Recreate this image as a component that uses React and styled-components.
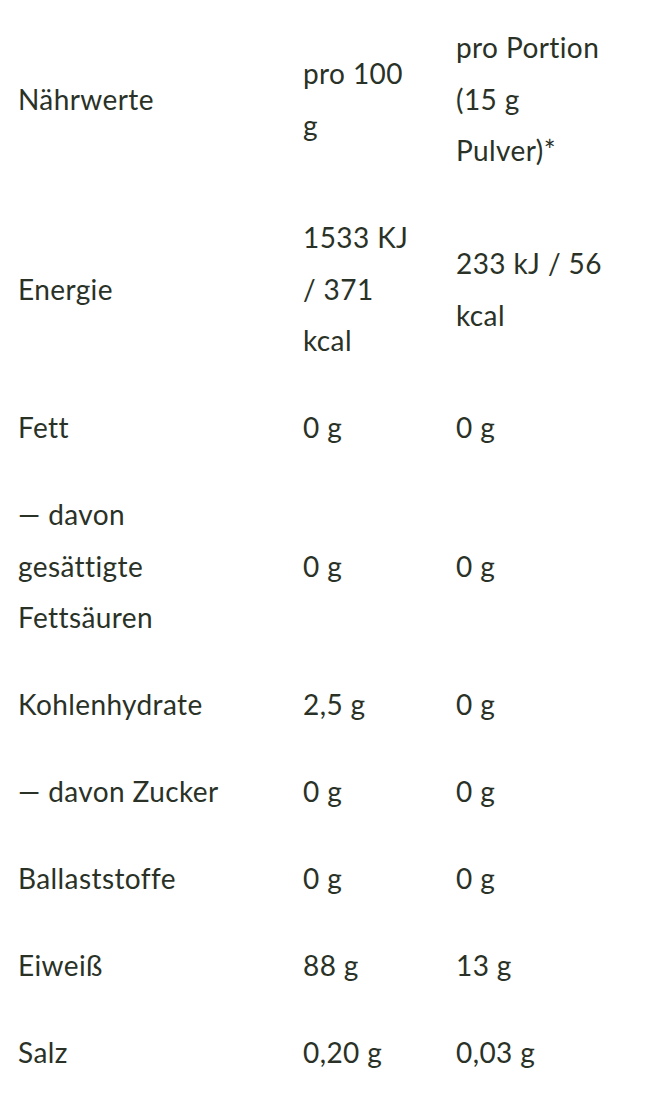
import React from 'react';
import styled, { createGlobalStyle } from 'styled-components';

const GlobalStyle = createGlobalStyle`
  body {
    margin: 0;
    background: #fff;
    font-family: 'Lato', 'Noto Sans', sans-serif;
  }
`;

const Table = styled.div`
  display: grid;
  grid-template-columns: 285px 153px 188px;
  padding-top: 4.5px;
  color: #2a3227;
  font-size: 28px;
  line-height: 51.5px;
  letter-spacing: 0.4px;
`;

const Cell = styled.div`
  padding: 17.75px ${(p) => (p.$first ? '42px' : '18px')} 17.75px 18px;
  display: flex;
  align-items: center;
  font-weight: 400;
`;

const rows = [
  ['Nährwerte', 'pro 100 g', 'pro Portion (15 g Pulver)*'],
  ['Energie', '1533 KJ / 371 kcal', '233 kJ / 56 kcal'],
  ['Fett', '0 g', '0 g'],
  ['— davon gesättigte Fettsäuren', '0 g', '0 g'],
  ['Kohlenhydrate', '2,5 g', '0 g'],
  ['— davon Zucker', '0 g', '0 g'],
  ['Ballaststoffe', '0 g', '0 g'],
  ['Eiweiß', '88 g', '13 g'],
  ['Salz', '0,20 g', '0,03 g'],
];

export default function App() {
  return (
    <>
      <GlobalStyle />
      <Table>
        {rows.map((row) =>
          row.map((text, i) => (
            <Cell key={row[0] + i} $first={i === 0}>
              {text}
            </Cell>
          ))
        )}
      </Table>
    </>
  );
}
